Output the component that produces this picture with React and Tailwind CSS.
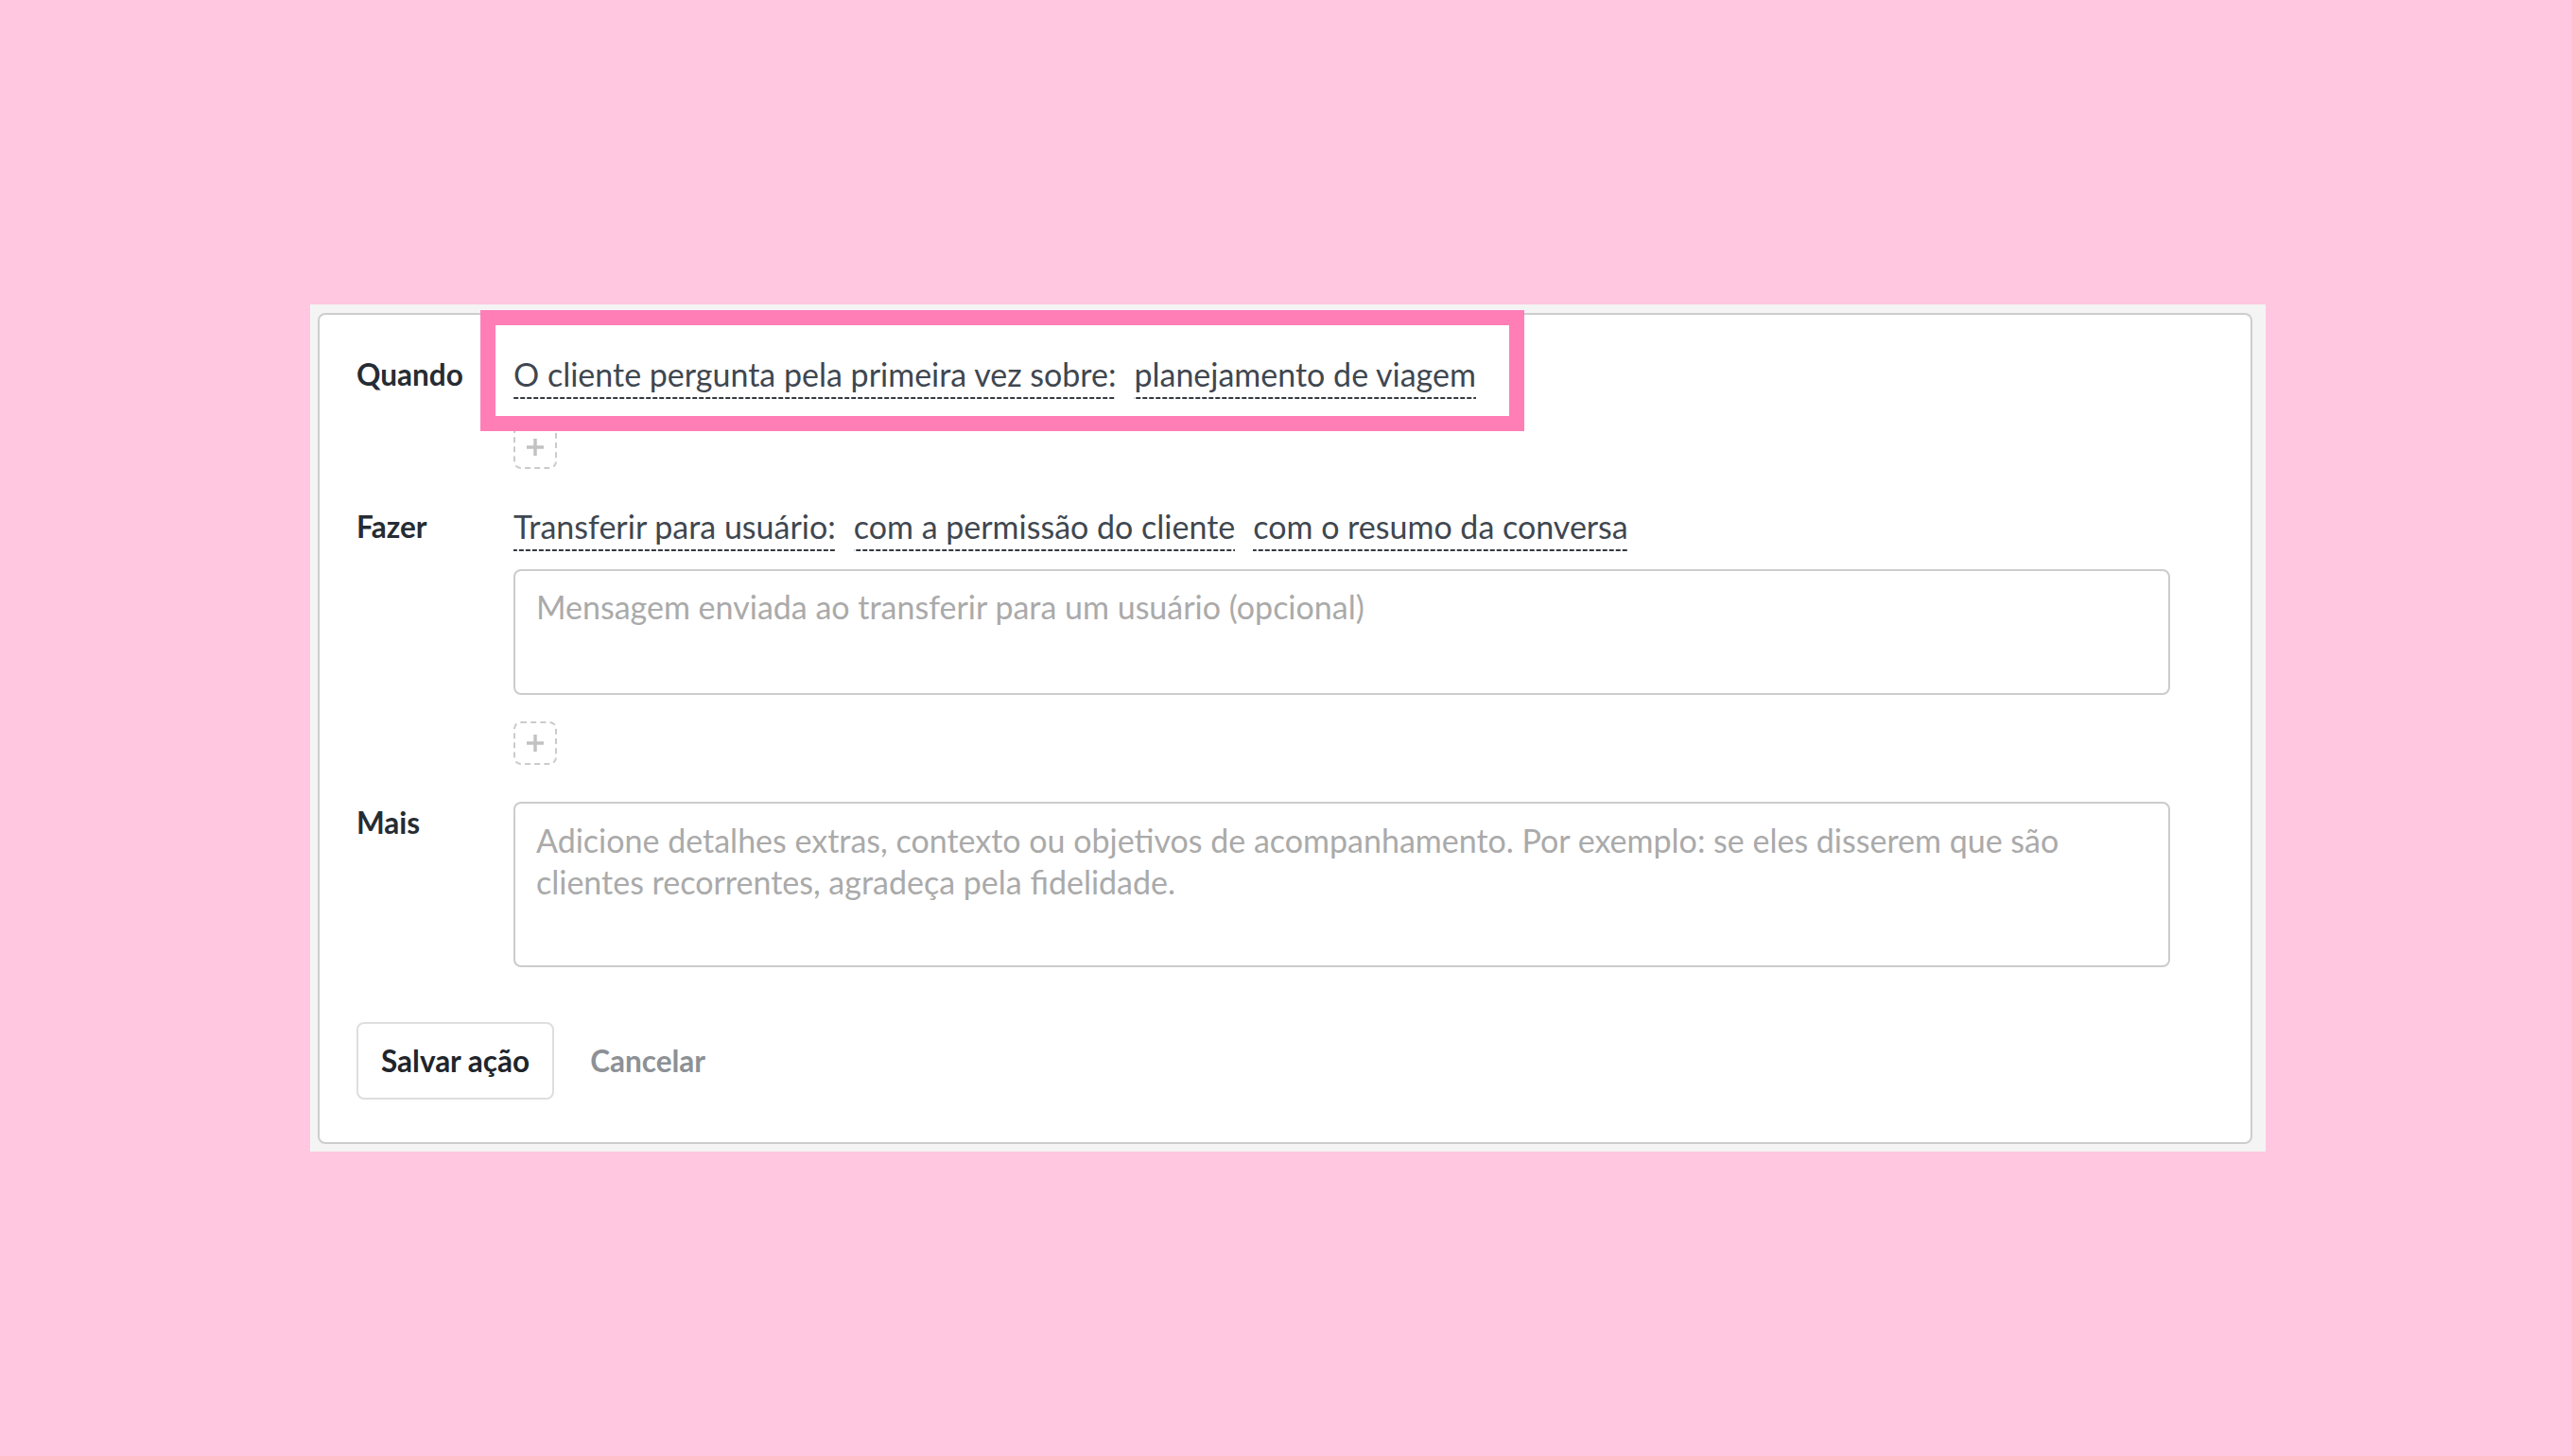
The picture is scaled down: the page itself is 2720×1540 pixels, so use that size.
const dashed =
  "pb-[6px] bg-[linear-gradient(to_right,#343a41_5px,transparent_5px)] bg-[length:7px_2px] bg-repeat-x bg-bottom";

const PlusBox = () => (
  <div className="w-[46px] h-[46px] rounded-[8px] border-2 border-dashed border-[#cbcbcb] flex items-center justify-center">
    <svg width="20" height="20" viewBox="0 0 20 20">
      <path d="M10 1v18M1 10h18" stroke="#c2c2c2" strokeWidth="3.5" />
    </svg>
  </div>
);

const Label = ({ children, className = "" }) => (
  <div className={`font-bold text-[31.5px] text-[#262c33] ${className}`}>{children}</div>
);

export default function App() {
  return (
    <div className="min-h-[1540px] bg-[#ffc8e0] pt-[322px] pl-[328px] font-['Lato',sans-serif]">
      <div className="w-[2068px] bg-[#f4f4f4] pl-[8px] pt-[9px] pr-[14px] pb-[8px]">
        <div className="relative bg-white border-2 border-[#cdcdcd] rounded-[8px] pl-[39px] pt-[41px] pb-[45px] text-[34px] leading-[44px]">
          <div className="grid grid-cols-[166px_1752px]">
            <Label>Quando</Label>
            <div className="text-[#3f4750]">
              <span className={dashed}>O cliente pergunta pela primeira vez sobre:</span>
              <span className={`${dashed} ml-[19px]`}>planejamento de viagem</span>
            </div>

            <div />
            <div className="mt-[32px]">
              <PlusBox />
            </div>

            <Label className="mt-[39px]">Fazer</Label>
            <div className="mt-[39px] text-[#3f4750]">
              <span className={dashed}>Transferir para usuário:</span>
              <span className={`${dashed} ml-[19px]`}>com a permissão do cliente</span>
              <span className={`${dashed} ml-[19px]`}>com o resumo da conversa</span>
              <textarea
                placeholder="Mensagem enviada ao transferir para um usuário (opcional)"
                className="block mt-[23px] w-full h-[133px] resize-none rounded-[8px] border-2 border-[#cccccc] px-[22px] pt-[16px] outline-none placeholder:text-[#aaaaaa]"
              />
              <div className="mt-[28px]">
                <PlusBox />
              </div>
            </div>

            <Label className="mt-[39px]">Mais</Label>
            <textarea
              placeholder="Adicione detalhes extras, contexto ou objetivos de acompanhamento. Por exemplo: se eles disserem que são clientes recorrentes, agradeça pela fidelidade."
              className="block mt-[39px] w-full h-[175px] resize-none rounded-[8px] border-2 border-[#cccccc] px-[22px] pt-[17px] outline-none placeholder:text-[#aaaaaa]"
            />
          </div>

          <div className="mt-[58px] flex items-center text-[31.5px]">
            <button className="h-[82px] px-[24px] rounded-[8px] border-2 border-[#dedede] bg-white font-bold text-[#1f252b]">
              Salvar ação
            </button>
            <button className="ml-[38px] font-bold text-[#8c9196]">Cancelar</button>
          </div>

          {/* highlight frame drawn over the first row */}
          <div className="absolute left-[170px] top-[-5px] w-[1104px] h-[128px] border-[16px] border-[#ff7eb6] pointer-events-none" />
        </div>
      </div>
    </div>
  );
}
